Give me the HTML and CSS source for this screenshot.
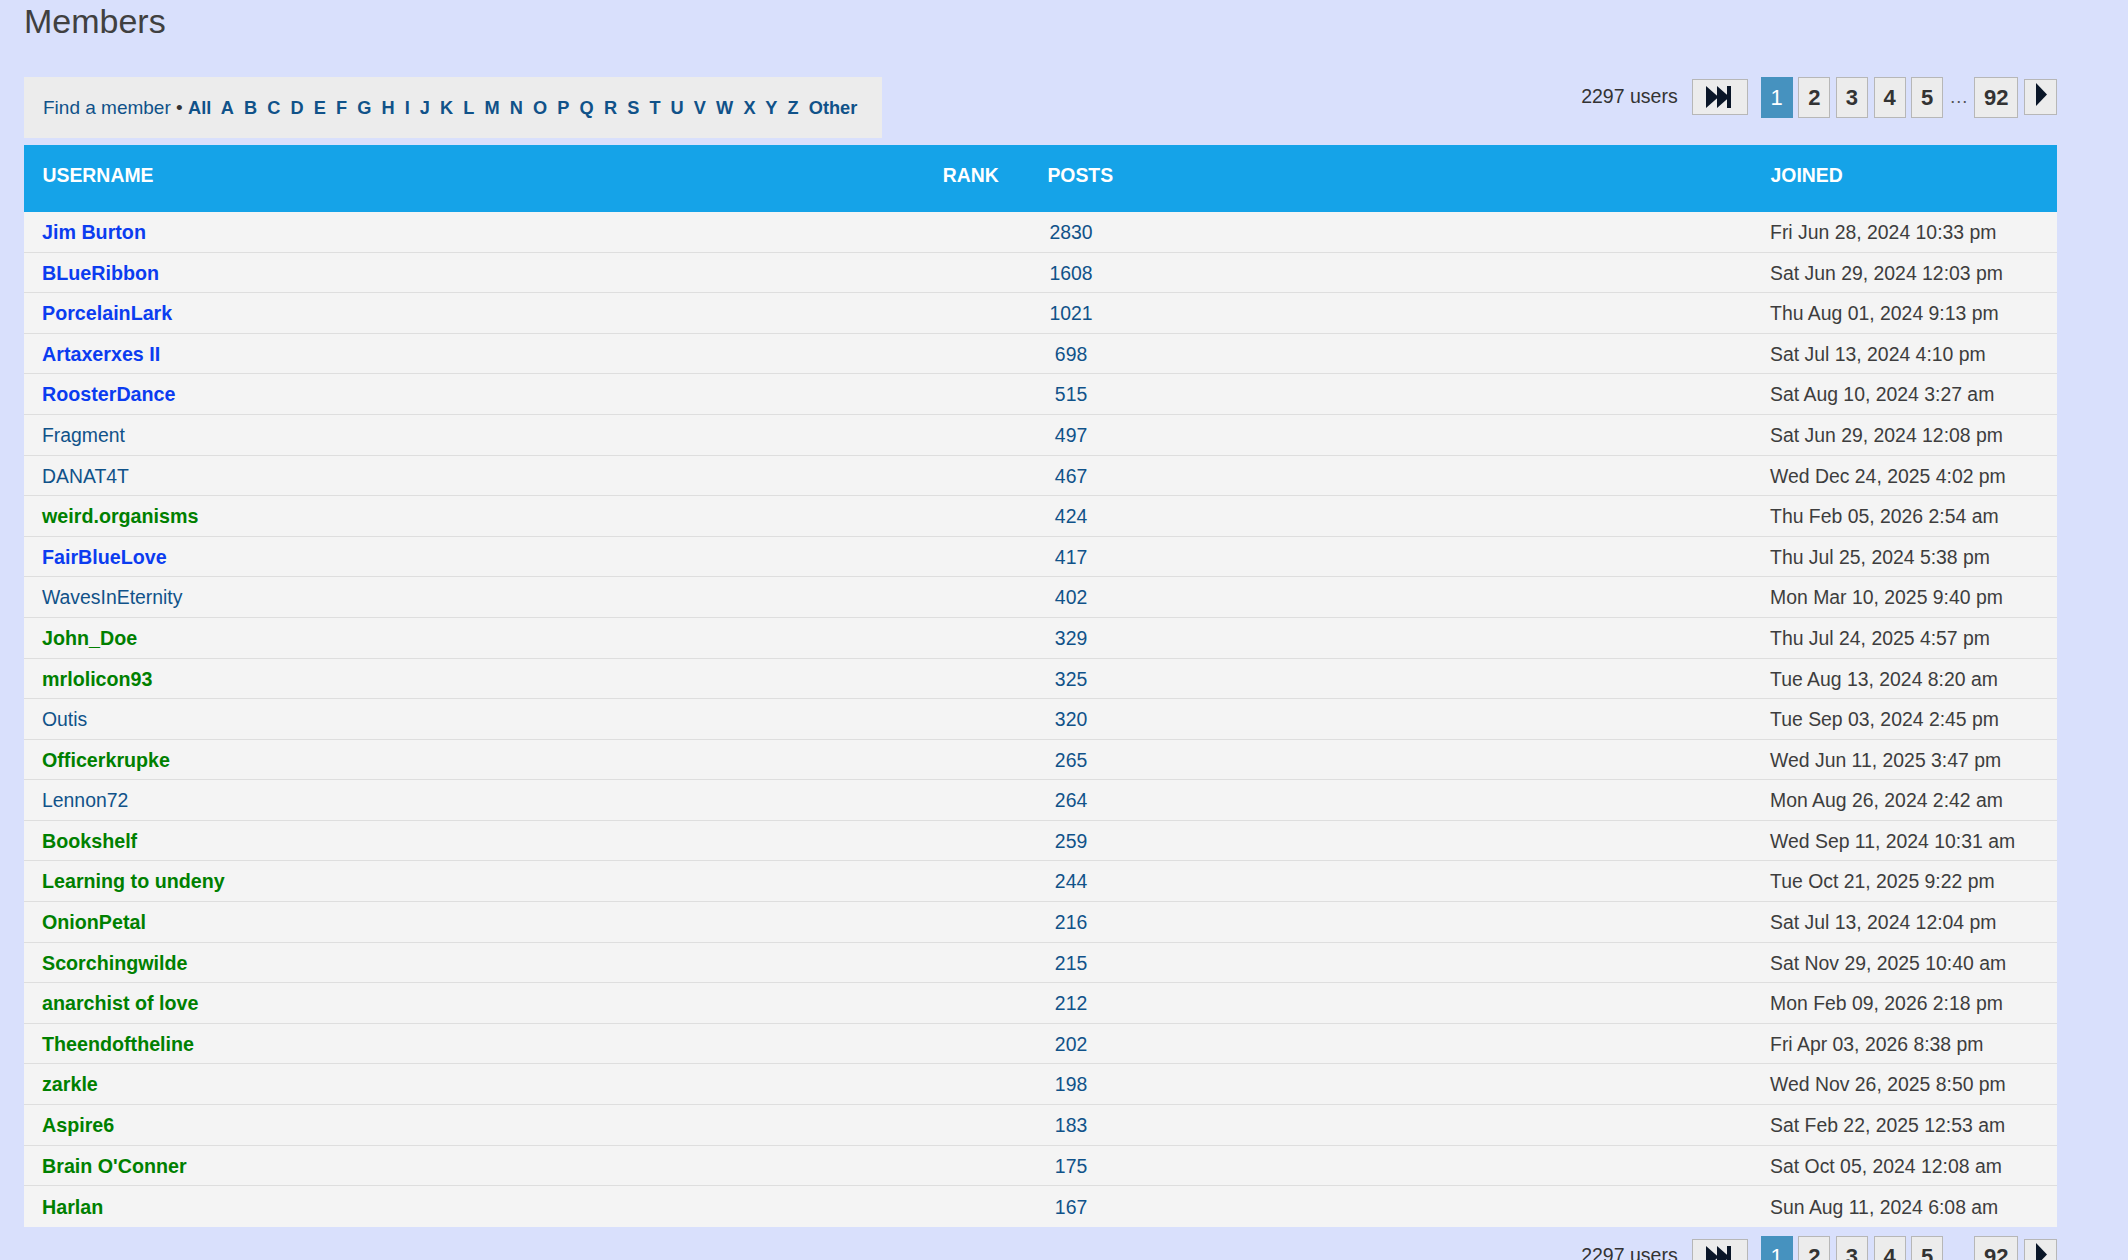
FILE: index.html
```html
<!DOCTYPE html>
<html lang="en">
<head>
<meta charset="utf-8">
<title>Members</title>
<link rel="stylesheet" href="styles.css">
</head>
<body>
<div class="wrap">
  <h1 class="page-title">Members</h1>

  <div class="action-bar">
    <div class="find-panel">
      <span class="find-label">Find a member</span><span class="bullet">&nbsp;•&nbsp;</span><strong class="letters"><a href="#">All</a>&nbsp; <a href="#">A</a>&nbsp; <a href="#">B</a>&nbsp; <a href="#">C</a>&nbsp; <a href="#">D</a>&nbsp; <a href="#">E</a>&nbsp; <a href="#">F</a>&nbsp; <a href="#">G</a>&nbsp; <a href="#">H</a>&nbsp; <a href="#">I</a>&nbsp; <a href="#">J</a>&nbsp; <a href="#">K</a>&nbsp; <a href="#">L</a>&nbsp; <a href="#">M</a>&nbsp; <a href="#">N</a>&nbsp; <a href="#">O</a>&nbsp; <a href="#">P</a>&nbsp; <a href="#">Q</a>&nbsp; <a href="#">R</a>&nbsp; <a href="#">S</a>&nbsp; <a href="#">T</a>&nbsp; <a href="#">U</a>&nbsp; <a href="#">V</a>&nbsp; <a href="#">W</a>&nbsp; <a href="#">X</a>&nbsp; <a href="#">Y</a>&nbsp; <a href="#">Z</a>&nbsp; <a href="#">Other</a></strong>
    </div>
    <div class="pagination">
      <span class="count">2297 users</span>
      <a class="jump" href="#"><svg class="ico-ff" viewBox="0 0 25 22" aria-hidden="true"><path d="M0 0 L12.5 11 L0 22 Z M11 0 L23.5 11 L11 22 Z"/><rect x="21" y="0" width="4" height="22"/></svg></a>
      <ul class="pages">
        <li><span class="page active">1</span></li>
        <li><a class="page" href="#">2</a></li>
        <li><a class="page" href="#">3</a></li>
        <li><a class="page" href="#">4</a></li>
        <li><a class="page" href="#">5</a></li>
        <li class="ellipsis">…</li>
        <li><a class="page" href="#">92</a></li>
        <li><a class="next" href="#"><svg class="ico-next" viewBox="0 0 11 23" aria-hidden="true"><path d="M0 0 L11 11.5 L0 23 Z"/></svg></a></li>
      </ul>
    </div>
  </div>

  <table class="memberlist">
    <colgroup>
      <col class="c-name"><col class="c-posts"><col class="c-info"><col class="c-joined">
    </colgroup>
    <thead>
      <tr>
        <th class="name"><span class="rank">Rank</span>Username</th>
        <th class="posts">Posts</th>
        <th class="info"></th>
        <th class="joined">Joined</th>
      </tr>
    </thead>
    <tbody>
      <tr><td><a class="u-blue" href="#">Jim Burton</a></td><td class="posts"><a href="#">2830</a></td><td></td><td class="joined">Fri Jun 28, 2024 10:33 pm</td></tr>
      <tr><td><a class="u-blue" href="#">BLueRibbon</a></td><td class="posts"><a href="#">1608</a></td><td></td><td class="joined">Sat Jun 29, 2024 12:03 pm</td></tr>
      <tr><td><a class="u-blue" href="#">PorcelainLark</a></td><td class="posts"><a href="#">1021</a></td><td></td><td class="joined">Thu Aug 01, 2024 9:13 pm</td></tr>
      <tr><td><a class="u-blue" href="#">Artaxerxes II</a></td><td class="posts"><a href="#">698</a></td><td></td><td class="joined">Sat Jul 13, 2024 4:10 pm</td></tr>
      <tr><td><a class="u-blue" href="#">RoosterDance</a></td><td class="posts"><a href="#">515</a></td><td></td><td class="joined">Sat Aug 10, 2024 3:27 am</td></tr>
      <tr><td><a class="u-plain" href="#">Fragment</a></td><td class="posts"><a href="#">497</a></td><td></td><td class="joined">Sat Jun 29, 2024 12:08 pm</td></tr>
      <tr><td><a class="u-plain" href="#">DANAT4T</a></td><td class="posts"><a href="#">467</a></td><td></td><td class="joined">Wed Dec 24, 2025 4:02 pm</td></tr>
      <tr><td><a class="u-green" href="#">weird.organisms</a></td><td class="posts"><a href="#">424</a></td><td></td><td class="joined">Thu Feb 05, 2026 2:54 am</td></tr>
      <tr><td><a class="u-blue" href="#">FairBlueLove</a></td><td class="posts"><a href="#">417</a></td><td></td><td class="joined">Thu Jul 25, 2024 5:38 pm</td></tr>
      <tr><td><a class="u-plain" href="#">WavesInEternity</a></td><td class="posts"><a href="#">402</a></td><td></td><td class="joined">Mon Mar 10, 2025 9:40 pm</td></tr>
      <tr><td><a class="u-green" href="#">John_Doe</a></td><td class="posts"><a href="#">329</a></td><td></td><td class="joined">Thu Jul 24, 2025 4:57 pm</td></tr>
      <tr><td><a class="u-green" href="#">mrlolicon93</a></td><td class="posts"><a href="#">325</a></td><td></td><td class="joined">Tue Aug 13, 2024 8:20 am</td></tr>
      <tr><td><a class="u-plain" href="#">Outis</a></td><td class="posts"><a href="#">320</a></td><td></td><td class="joined">Tue Sep 03, 2024 2:45 pm</td></tr>
      <tr><td><a class="u-green" href="#">Officerkrupke</a></td><td class="posts"><a href="#">265</a></td><td></td><td class="joined">Wed Jun 11, 2025 3:47 pm</td></tr>
      <tr><td><a class="u-plain" href="#">Lennon72</a></td><td class="posts"><a href="#">264</a></td><td></td><td class="joined">Mon Aug 26, 2024 2:42 am</td></tr>
      <tr><td><a class="u-green" href="#">Bookshelf</a></td><td class="posts"><a href="#">259</a></td><td></td><td class="joined">Wed Sep 11, 2024 10:31 am</td></tr>
      <tr><td><a class="u-green" href="#">Learning to undeny</a></td><td class="posts"><a href="#">244</a></td><td></td><td class="joined">Tue Oct 21, 2025 9:22 pm</td></tr>
      <tr><td><a class="u-green" href="#">OnionPetal</a></td><td class="posts"><a href="#">216</a></td><td></td><td class="joined">Sat Jul 13, 2024 12:04 pm</td></tr>
      <tr><td><a class="u-green" href="#">Scorchingwilde</a></td><td class="posts"><a href="#">215</a></td><td></td><td class="joined">Sat Nov 29, 2025 10:40 am</td></tr>
      <tr><td><a class="u-green" href="#">anarchist of love</a></td><td class="posts"><a href="#">212</a></td><td></td><td class="joined">Mon Feb 09, 2026 2:18 pm</td></tr>
      <tr><td><a class="u-green" href="#">Theendoftheline</a></td><td class="posts"><a href="#">202</a></td><td></td><td class="joined">Fri Apr 03, 2026 8:38 pm</td></tr>
      <tr><td><a class="u-green" href="#">zarkle</a></td><td class="posts"><a href="#">198</a></td><td></td><td class="joined">Wed Nov 26, 2025 8:50 pm</td></tr>
      <tr><td><a class="u-green" href="#">Aspire6</a></td><td class="posts"><a href="#">183</a></td><td></td><td class="joined">Sat Feb 22, 2025 12:53 am</td></tr>
      <tr><td><a class="u-green" href="#">Brain O'Conner</a></td><td class="posts"><a href="#">175</a></td><td></td><td class="joined">Sat Oct 05, 2024 12:08 am</td></tr>
      <tr><td><a class="u-green" href="#">Harlan</a></td><td class="posts"><a href="#">167</a></td><td></td><td class="joined">Sun Aug 11, 2024 6:08 am</td></tr>
    </tbody>
  </table>

  <div class="action-bar bottom">
    <div class="pagination">
      <span class="count">2297 users</span>
      <a class="jump" href="#"><svg class="ico-ff" viewBox="0 0 25 22" aria-hidden="true"><path d="M0 0 L12.5 11 L0 22 Z M11 0 L23.5 11 L11 22 Z"/><rect x="21" y="0" width="4" height="22"/></svg></a>
      <ul class="pages">
        <li><span class="page active">1</span></li>
        <li><a class="page" href="#">2</a></li>
        <li><a class="page" href="#">3</a></li>
        <li><a class="page" href="#">4</a></li>
        <li><a class="page" href="#">5</a></li>
        <li class="ellipsis">…</li>
        <li><a class="page" href="#">92</a></li>
        <li><a class="next" href="#"><svg class="ico-next" viewBox="0 0 11 23" aria-hidden="true"><path d="M0 0 L11 11.5 L0 23 Z"/></svg></a></li>
      </ul>
    </div>
  </div>
</div>
</body>
</html>
```
FILE: styles.css
```css
html, body {
  margin: 0;
  padding: 0;
}
body {
  background: #d9e0fc;
  font-family: "Liberation Sans", Arial, sans-serif;
  font-size: 19px;
  color: #333333;
}
a {
  text-decoration: none;
}
.wrap {
  padding: 0 71px 40px 24px;
}
.page-title {
  margin: 0;
  padding-top: 1.7px;
  font-size: 34px;
  line-height: 39px;
  font-weight: normal;
  color: #404040;
}

/* action bar */
.action-bar {
  display: flex;
  justify-content: space-between;
  align-items: flex-start;
  margin-top: 36px;
  margin-bottom: 7.3px;
}
.action-bar.bottom {
  justify-content: flex-end;
  margin-top: 9px;
  margin-bottom: 0;
}
.find-panel {
  background: #ececec;
  height: 61px;
  width: 858px;
  box-sizing: border-box;
  padding: 2px 19px 0;
  display: flex;
  align-items: center;
  color: #105289;
  white-space: nowrap;
}
.find-label {
  color: #105289;
}
.bullet {
  color: #333333;
}
.letters {
  font-size: 18.2px;
}
.letters a {
  color: #105289;
}

/* pagination */
.pagination {
  display: flex;
  align-items: center;
  height: 41px;
}
.count {
  color: #333333;
  font-size: 19.5px;
  margin-right: 14px;
  position: relative;
  top: -1px;
}
.jump {
  display: flex;
  align-items: center;
  box-sizing: border-box;
  width: 56.5px;
  height: 36.6px;
  padding-left: 13px;
  background: #ececec;
  border: 1px solid #b7b7b7;
  margin-right: 12.5px;
}
.ico-ff {
  width: 25px;
  height: 22px;
  fill: #0a1628;
}
.pages {
  display: flex;
  align-items: center;
  list-style: none;
  margin: 0;
  padding: 0;
  gap: 5.6px;
}
.page {
  display: block;
  box-sizing: border-box;
  height: 41px;
  line-height: 39px;
  padding: 0 8.9px;
  background: #ececec;
  border: 1px solid #b7b7b7;
  color: #333333;
  font-size: 22px;
  font-weight: bold;
}
.page.active {
  background: #4692bf;
  border-color: #4692bf;
  color: #ffffff;
  font-weight: normal;
}
.ellipsis {
  color: #555555;
  font-size: 19px;
  padding: 0 0.4px;
}
.next {
  display: flex;
  align-items: flex-start;
  box-sizing: border-box;
  width: 33px;
  height: 36px;
  padding: 3px 0 0 11px;
  background: #ececec;
  border: 1px solid #b7b7b7;
}
.ico-next {
  width: 11px;
  height: 23px;
  fill: #0a1628;
}

/* table */
.memberlist {
  width: 100%;
  border-collapse: collapse;
  table-layout: fixed;
  font-size: 19.4px;
}
.c-posts { width: 7%; }
.c-info { width: 30%; }
.c-joined { width: 15%; }
.memberlist thead th {
  background: #15a3e8;
  color: #ffffff;
  font-weight: bold;
  text-transform: uppercase;
  text-align: left;
  height: 67px;
  box-sizing: border-box;
  padding: 0 0 5px 18.5px;
  line-height: 21.6px;
  vertical-align: middle;
}
.memberlist thead th.name {
  padding-right: 1px;
}
.rank {
  float: right;
}
.memberlist thead th.posts {
  text-align: center;
}
.memberlist tbody td {
  background: #f4f4f4;
  border-bottom: 1px solid #dedede;
  padding: 10px 18px 8px;
  line-height: 21.6px;
  white-space: nowrap;
  overflow: hidden;
}
.memberlist tbody tr:last-child td {
  border-bottom: none;
  height: 41.6px;
  box-sizing: border-box;
}
.memberlist td.posts {
  text-align: center;
}
.memberlist td.posts a {
  color: #105289;
}
.memberlist td.joined {
  color: #3d3d3d;
}
.u-blue {
  color: #0b3cf0;
  font-weight: bold;
  font-size: 19.7px;
}
.u-green {
  color: #008000;
  font-weight: bold;
  font-size: 19.7px;
}
.u-plain {
  color: #105289;
}
```
